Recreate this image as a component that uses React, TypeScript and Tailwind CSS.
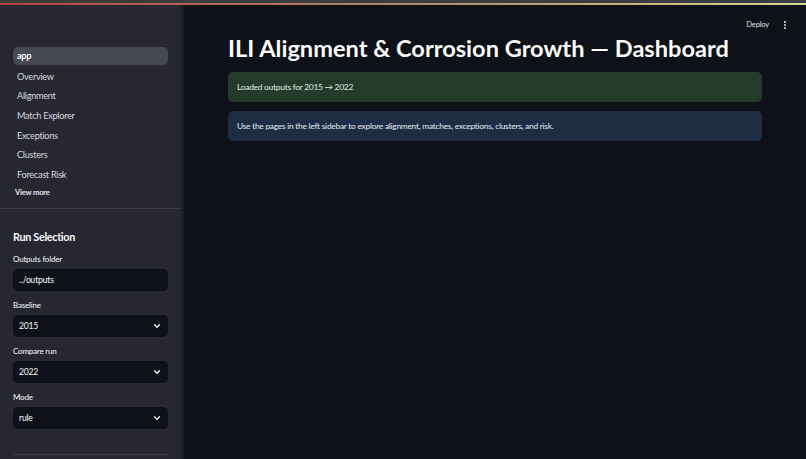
import { ChevronDown, EllipsisVertical } from "lucide-react";

const pages = ["Overview", "Alignment", "Match Explorer", "Exceptions", "Clusters", "Forecast Risk"];

const Field = ({ label, value, select }: { label: string; value: string; select?: boolean }) => (
  <div className="flex flex-col gap-[4px]">
    <span className="text-[8px] leading-[12px] tracking-[-0.2px] text-[#fafafa]">{label}</span>
    <div className="flex h-[22px] items-center justify-between rounded-[5px] bg-[#0e1117] px-[6px] text-[8.6px] tracking-[-0.2px] text-[#fafafa]">
      <span>{value}</span>
      {select && <ChevronDown className="h-[10px] w-[10px]" strokeWidth={3} />}
    </div>
  </div>
);

export default function App() {
  return (
    <div
      className="flex h-[459px] w-[806px] flex-col overflow-hidden bg-[#0e1117] text-[#fafafa]"
      style={{ fontFamily: "Lato, 'Liberation Sans', sans-serif" }}
    >
      {/* top decoration */}
      <div className="h-[3px] shrink-0 bg-[#3c3c3e]" />
      <div className="h-[2px] shrink-0 bg-gradient-to-r from-[#b5403f] via-[#a98a6a] to-[#d5d894]" />

      <div className="flex min-h-0 flex-1">
        {/* sidebar */}
        <aside className="flex w-[184px] shrink-0 flex-col border-r-[3px] border-[#1d1e25] bg-[#262730]">
          <nav className="flex flex-col px-[13px] pt-[42px]">
            <div className="mb-[2px] flex h-[18px] items-center rounded-[5px] bg-[#464853] px-[4px] text-[9.2px] font-bold tracking-[-0.3px]">app</div>
            {pages.map((p) => (
              <div key={p} className="flex h-[19.6px] items-center px-[4px] text-[9.2px] tracking-[-0.3px] text-[#d6d7dc]">
                {p}
              </div>
            ))}
            <div className="mt-[2px] px-[2px] text-[7.6px] font-bold tracking-[-0.2px] text-[#e6e6ea]">View more</div>
          </nav>
          <div className="mt-[10px] h-px w-[181px] shrink-0 bg-[#3a3b44]" />

          <div className="flex flex-col px-[13px] pt-[21px]">
            <h2 className="text-[10.8px] font-bold leading-[14px] tracking-[-0.3px]">Run Selection</h2>
            <div className="mt-[9px] flex flex-col gap-[8px]">
              <Field label="Outputs folder" value="../outputs" />
              <Field label="Baseline" value="2015" select />
              <Field label="Compare run" value="2022" select />
              <Field label="Mode" value="rule" select />
            </div>
            <div className="mt-[25px] h-px shrink-0 bg-[#3a3b44]" />
          </div>
        </aside>

        {/* main */}
        <main className="relative flex-1 px-[44px] pt-[28px]">
          <div className="absolute right-[16px] top-[14px] flex items-center gap-[11px] text-[7.6px] tracking-[-0.2px] text-[#e0e0e4]">
            <span>Deploy</span>
            <EllipsisVertical className="h-[10px] w-[10px]" strokeWidth={3} />
          </div>
          <h1 className="text-[23.6px] font-bold leading-[30px]">
            ILI Alignment &amp; Corrosion Growth — Dashboard
          </h1>
          <div className="mt-[9px] flex flex-col gap-[9px]">
            <div className="flex h-[30px] items-center rounded-[5px] bg-[#243a2b] px-[9px] text-[8.4px] tracking-[-0.25px] text-[#e2eae2]">
              Loaded outputs for 2015 → 2022
            </div>
            <div className="flex h-[30px] items-center rounded-[5px] bg-[#1e2d44] px-[9px] text-[8.4px] tracking-[-0.25px] text-[#e2e8f1]">
              Use the pages in the left sidebar to explore alignment, matches, exceptions, clusters, and risk.
            </div>
          </div>
        </main>
      </div>
    </div>
  );
}
